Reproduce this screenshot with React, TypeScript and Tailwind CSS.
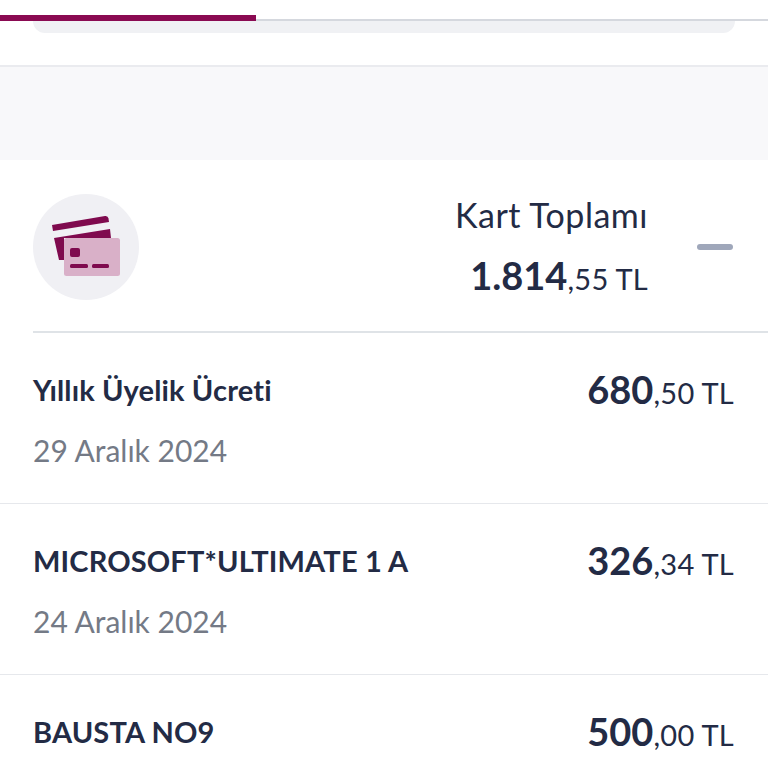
type Transaction = {
  title: string;
  date?: string;
  whole: string;
  cents: string;
};

const transactions: Transaction[] = [
  { title: 'Yıllık Üyelik Ücreti', date: '29 Aralık 2024', whole: '680', cents: ',50 TL' },
  { title: 'MICROSOFT*ULTIMATE 1 A', date: '24 Aralık 2024', whole: '326', cents: ',34 TL' },
  { title: 'BAUSTA NO9', whole: '500', cents: ',00 TL' },
];

function CardsIcon() {
  return (
    <svg width="72" height="66" viewBox="0 0 72 66" fill="none">
      <path d="M2 11 L55 2 Q58 1.6 58.5 4.5 L59 8 L3 17 Z" fill="#7f0a4e" />
      <path d="M4 24 L60 15 L61 24 L14 24 L14 46 L9 46 Z" fill="#7f0a4e" />
      <rect x="14" y="24" width="56" height="38" rx="2.5" fill="#d9b0c8" />
      <rect x="20" y="34" width="10" height="9" rx="2" fill="#7f0a4e" />
      <rect x="20" y="50" width="18" height="4" rx="1.5" fill="#7f0a4e" />
      <rect x="42" y="50" width="17" height="4" rx="1.5" fill="#7f0a4e" />
    </svg>
  );
}

function TransactionRow({ item }: { item: Transaction }) {
  return (
    <div className="h-[171px] border-b border-[#e6e8ec] pl-[33px] pr-[34px] pt-[37px]">
      <div className="flex items-center justify-between h-[40px]">
        <span className="text-[29px] font-bold text-[#232b45] tracking-[0.15px]">{item.title}</span>
        <span className="text-[#232b45] text-[29px] tracking-[0.3px] -mt-[2px]">
          <span className="text-[38px] font-bold tracking-normal">{item.whole}</span>
          {item.cents}
        </span>
      </div>
      {item.date && <p className="mt-[20px] text-[30px] leading-[40px] text-[#747a86]">{item.date}</p>}
    </div>
  );
}

export default function App() {
  return (
    <div className="h-[768px] overflow-hidden bg-white font-['Lato',sans-serif]">
      <div className="h-[15px]" />
      <div className="relative h-[6px] border-b-2 border-[#d5d8de]">
        <div className="absolute left-0 top-0 h-[6px] w-[256px] bg-[#8a0a52]" />
      </div>
      <div className="mx-[33px] h-[12px] rounded-b-[14px] bg-[#f0f1f4]" />

      <div className="h-[32px]" />
      <div className="h-[95px] border-t-2 border-[#eaebef] bg-[#f8f8fa]" />

      <div className="relative flex h-[173px] items-center justify-between pl-[33px] pr-[35px]">
        <div className="flex h-[106px] w-[106px] items-center justify-center rounded-full bg-[#f0f0f4]">
          <CardsIcon />
        </div>
        <div className="flex items-center gap-[49px]">
          <div className="text-right text-[#232b45]">
            <p className="text-[34px] leading-[44px] tracking-[0.5px]">Kart Toplamı</p>
            <p className="mt-[16px] text-[29px] leading-[44px] tracking-[0.3px]">
              <span className="text-[38px] font-bold tracking-normal">1.814</span>,55 TL
            </p>
          </div>
          <div className="h-[6px] w-[36px] rounded-full bg-[#9fa7ba]" />
        </div>
        <div className="absolute bottom-0 left-[33px] right-0 h-[2px] bg-[#dfe3e7]" />
      </div>

      {transactions.map((item) => (
        <TransactionRow key={item.title} item={item} />
      ))}
    </div>
  );
}
